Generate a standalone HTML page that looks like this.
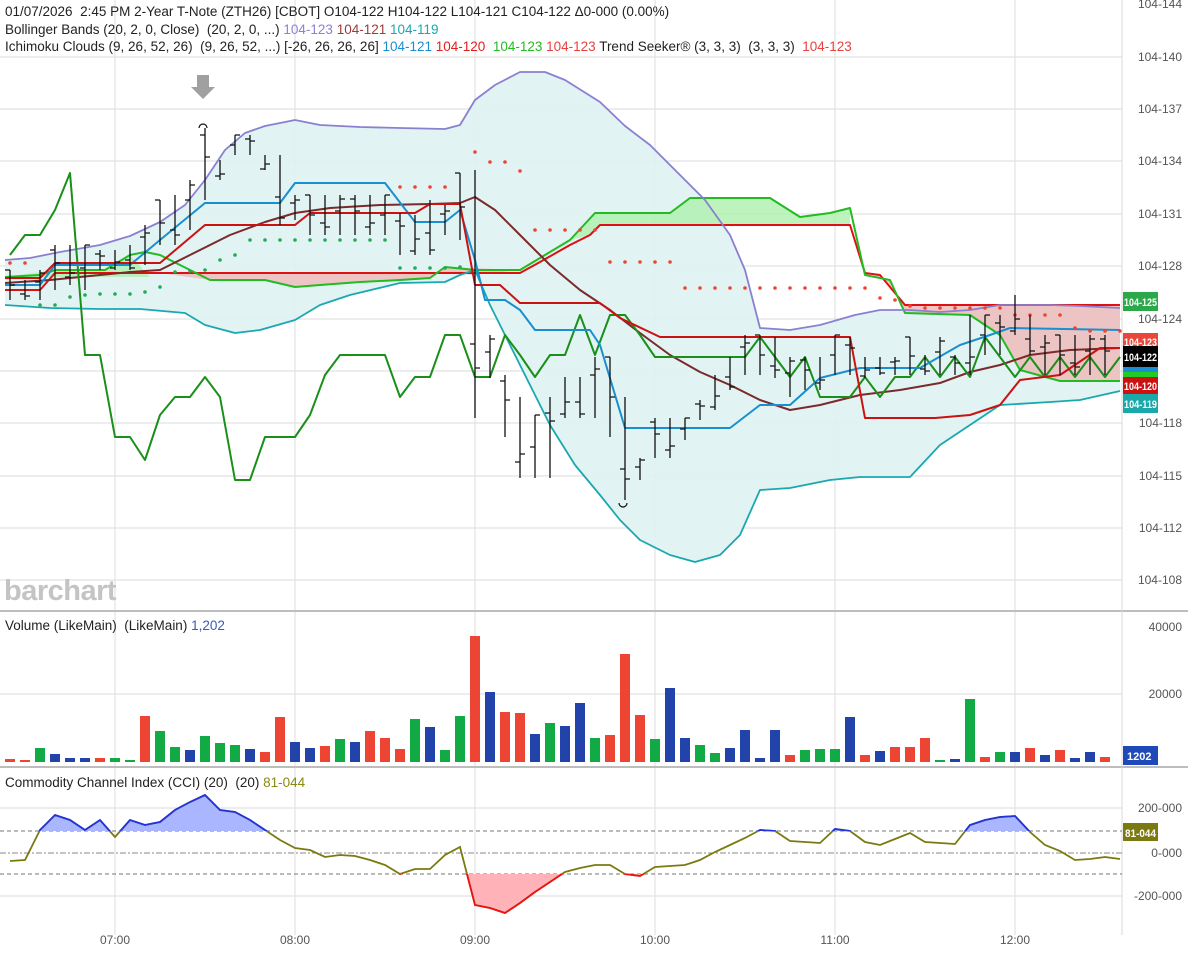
<!DOCTYPE html>
<html><head><meta charset="utf-8">
<style>
html,body{margin:0;padding:0;background:#fff;width:1188px;height:953px;overflow:hidden}
svg{display:block;font-family:"Liberation Sans","DejaVu Sans",sans-serif}
</style></head><body>
<svg id="s" width="1188" height="953" viewBox="0 0 1188 953" xmlns="http://www.w3.org/2000/svg">
<defs>
<clipPath id="above"><rect x="0" y="770" width="1122" height="61"/></clipPath>
<clipPath id="below"><rect x="0" y="874" width="1122" height="60"/></clipPath>
</defs>
<g id="grid" stroke="#e2e2e2" stroke-width="1.2"></g>
<polygon id="bbfill" fill="#dff2f3" opacity="0.9"/>
<polygon fill="#f2b8b8" opacity="0.8" points="160,273 445,273 475,275 520,270 520,270 445,267 430,278 400,280 360,282 320,285 295,287 265,280 210,280 160,273"/>
<polygon fill="#aef0ae" opacity="0.8" points="5,280 55,277 150,277 130,255 105,270 55,270 5,277"/>
<polygon fill="#aef0ae" opacity="0.8" points="570,240 595,213 670,213 690,198 770,198 800,217 830,213 850,208 850,225 600,225 590,235"/>
<polygon fill="#f0b8b8" opacity="0.8" points="865,273 880,275 905,305 1120,305 1120,381 1060,381 1020,370 1000,335 970,315 905,313 890,280"/>
<g id="lines" fill="none" stroke-width="2" stroke-linejoin="round"></g>
<g id="dots"></g>
<g id="bars" stroke="#111" stroke-width="1.3" fill="none"></g>
<polygon points="197,75 209,75 209,87 215,87 203,99 191,87 197,87" fill="#a0a0a0"/>
<path d="M199,128 a4,4 0 0 1 8,0" stroke="#111" fill="none" stroke-width="1.2"/>
<path d="M619,503 a4,4 0 0 0 8,0" stroke="#111" fill="none" stroke-width="1.2"/>
<text x="4" y="600" font-size="29" font-weight="bold" fill="#c4c4c4" letter-spacing="-0.5">barchart</text>
<line x1="0" y1="611" x2="1188" y2="611" stroke="#bdbdbd" stroke-width="2"/>
<line x1="0" y1="767" x2="1188" y2="767" stroke="#bdbdbd" stroke-width="2"/>
<line x1="1122" y1="0" x2="1122" y2="935" stroke="#d8d8d8" stroke-width="1"/>
<g id="vol"></g>
<line x1="0" y1="831" x2="1122" y2="831" stroke="#777" stroke-dasharray="4,3"/>
<line x1="0" y1="874" x2="1122" y2="874" stroke="#777" stroke-dasharray="4,3"/>
<line x1="0" y1="853" x2="1122" y2="853" stroke="#888" stroke-dasharray="6,2,2,2"/>
<g id="cci"></g>
<g font-size="13.5" fill="#222">
<text x="5" y="16">01/07/2026&#160; 2:45 PM 2-Year T-Note (ZTH26) [CBOT] O104-122 H104-122 L104-121 C104-122 Δ0-000 (0.00%)</text>
<text x="5" y="34">Bollinger Bands (20, 2, 0, Close)&#160; (20, 2, 0, ...) <tspan fill="#8a84d0">104-123</tspan> <tspan fill="#a03a3a">104-121</tspan> <tspan fill="#1aa8b0">104-119</tspan></text>
<text x="5" y="51">Ichimoku Clouds (9, 26, 52, 26)&#160; (9, 26, 52, ...) [-26, 26, 26, 26] <tspan fill="#1a8fd0">104-121</tspan> <tspan fill="#e02020">104-120</tspan>&#160; <tspan fill="#22bb22">104-123</tspan> <tspan fill="#e84040">104-123</tspan> Trend Seeker® (3, 3, 3)&#160; (3, 3, 3)&#160; <tspan fill="#e84040">104-123</tspan></text>
<text x="5" y="630">Volume (LikeMain)&#160; (LikeMain) <tspan fill="#3a5ab8">1,202</tspan></text>
<text x="5" y="787">Commodity Channel Index (CCI) (20)&#160; (20) <tspan fill="#8a8a10">81-044</tspan></text>
</g>
<g font-size="12" fill="#555" text-anchor="end">
<text x="1182" y="8">104-144</text>
<text x="1182" y="61">104-140</text>
<text x="1182" y="113">104-137</text>
<text x="1182" y="165">104-134</text>
<text x="1182" y="218">104-131</text>
<text x="1182" y="270">104-128</text>
<text x="1182" y="323">104-124</text>
<text x="1182" y="427">104-118</text>
<text x="1182" y="480">104-115</text>
<text x="1182" y="532">104-112</text>
<text x="1182" y="584">104-108</text>
<text x="1182" y="631">40000</text>
<text x="1182" y="698">20000</text>
<text x="1182" y="812">200-000</text>
<text x="1182" y="857">0-000</text>
<text x="1182" y="900">-200-000</text>
</g>
<g font-size="12" fill="#555" text-anchor="middle">
<text x="115" y="944">07:00</text><text x="295" y="944">08:00</text><text x="475" y="944">09:00</text>
<text x="655" y="944">10:00</text><text x="835" y="944">11:00</text><text x="1015" y="944">12:00</text>
</g>
<g font-size="11" font-weight="bold" fill="#fff">
<rect x="1123" y="292" width="35" height="19" fill="#2aa84a"/><text x="1124" y="306" textLength="33" lengthAdjust="spacingAndGlyphs">104-125</text>
<rect x="1123" y="333" width="35" height="16" fill="#e8483a"/><text x="1124" y="346" textLength="33" lengthAdjust="spacingAndGlyphs">104-123</text>
<rect x="1123" y="346" width="35" height="21" fill="#000"/><text x="1124" y="361" textLength="33" lengthAdjust="spacingAndGlyphs">104-122</text>
<rect x="1123" y="367" width="35" height="5" fill="#1a8fd0"/>
<rect x="1123" y="372" width="35" height="5" fill="#22cc22"/>
<rect x="1123" y="377" width="35" height="17" fill="#cc1111"/><text x="1124" y="390" textLength="33" lengthAdjust="spacingAndGlyphs">104-120</text>
<rect x="1123" y="394" width="35" height="19" fill="#1aa8a8"/><text x="1124" y="408" textLength="33" lengthAdjust="spacingAndGlyphs">104-119</text>
<rect x="1123" y="746" width="35" height="19" fill="#1f49b8"/><text x="1127" y="760">1202</text>
<rect x="1123" y="823" width="35" height="18" fill="#7a7a10"/><text x="1125" y="837" textLength="31" lengthAdjust="spacingAndGlyphs">81-044</text>
</g>
</svg>
<script>
var NS="http://www.w3.org/2000/svg";
function el(p,t,a){var e=document.createElementNS(NS,t);for(var k in a)e.setAttribute(k,a[k]);document.getElementById(p).appendChild(e);return e;}
[57,109,161,214,266,319,371,423,476,528,580,694,808,896].forEach(function(y){el("grid","line",{x1:0,y1:y,x2:1122,y2:y});});
[115,295,475,655,835,1015].forEach(function(x){el("grid","line",{x1:x,y1:0,x2:x,y2:935});});
var up="5,260 30,258 60,252 100,245 130,236 160,222 185,205 205,180 225,150 245,133 265,126 295,120 320,125 360,127 400,128 445,129 460,125 475,100 495,85 520,72 545,72 565,80 600,102 625,126 650,145 680,175 705,200 730,235 745,270 760,328 790,330 820,325 855,315 880,310 910,310 940,312 970,310 1000,305 1050,305 1080,306 1120,308";
var lo="5,305 50,308 100,309 140,309 185,313 205,325 235,333 260,330 295,320 320,305 350,295 400,283 445,282 460,275 475,270 490,305 510,345 530,385 550,425 575,465 600,495 620,520 640,540 670,555 695,562 720,555 740,535 760,490 790,488 830,480 860,477 910,477 940,445 970,425 1000,405 1050,402 1080,400 1120,391";
document.getElementById("bbfill").setAttribute("points",up+" "+lo.split(" ").reverse().join(" "));
function pl(pts,c,w){el("lines","polyline",{points:pts,stroke:c,"stroke-width":w||2});}
pl("5,290 40,290 55,273 520,273 540,262 570,245 590,235 600,225 850,225 865,273 880,275 905,305 1120,305","#dd1111");
pl("5,277 40,275 55,270 105,270 130,255 145,252 160,255 210,280 265,280 295,287 320,285 360,282 400,280 430,278 445,267 475,270 520,270 545,255 570,240 595,213 670,213 690,198 770,198 800,217 830,213 850,208 865,275 890,280 905,313 970,315 1000,335 1020,370 1060,381 1120,381","#22bb22");
pl(up,"#8a80d0",1.8);pl(lo,"#1aa8b0",1.8);
pl("5,283 50,280 100,275 130,272 160,270 190,255 230,235 265,222 295,213 330,208 380,205 430,204 460,203 475,197 495,210 520,235 550,265 580,290 610,310 640,333 670,355 700,372 730,385 760,400 790,410 820,405 860,395 900,390 940,383 970,372 1000,365 1030,355 1070,350 1120,348","#7a2a2a");
pl("10,255 25,235 40,235 55,210 70,173 85,355 100,355 115,437 130,437 145,460 160,415 175,397 190,397 205,377 220,397 235,480 250,480 265,437 295,437 310,415 325,375 340,355 385,355 400,397 415,377 430,377 445,335 460,335 475,377 490,377 505,335 520,355 535,377 550,355 565,355 580,315 595,355 610,315 625,315 640,335 655,357 745,357 760,337 775,357 790,377 805,357 820,397 850,397 865,377 880,397 895,377 910,377 925,357 940,377 955,357 970,377 985,337 1000,357 1015,377 1030,357 1045,377 1060,357 1075,377 1090,357 1105,377 1120,357","#1a8f1a");
pl("5,285 40,285 55,265 130,265 160,240 205,203 280,203 295,183 385,183 415,222 445,222 460,210 475,260 485,300 505,300 520,310 535,330 590,330 600,345 625,428 730,428 760,405 790,405 820,378 860,368 920,368 960,345 990,335 1010,328 1120,330","#1a8fd0");
pl("5,278 40,278 55,263 160,263 205,225 295,225 310,213 415,213 430,204 460,204 475,285 500,285 520,303 600,303 620,318 660,337 850,337 865,418 935,418 970,415 1000,405 1020,380 1060,375 1100,348 1120,348","#cc1111");
var d=[[10,263,"r"],[25,263,"r"],[40,305,"g"],[55,305,"g"],[70,297,"g"],[85,295,"g"],[100,294,"g"],[115,294,"g"],[130,294,"g"],[145,292,"g"],[160,287,"g"],[175,272,"g"],[190,271,"g"],[205,270,"g"],[220,260,"g"],[235,255,"g"],[250,240,"g"],[265,240,"g"],[280,240,"g"],[295,240,"g"],[310,240,"g"],[325,240,"g"],[340,240,"g"],[355,240,"g"],[370,240,"g"],[385,240,"g"],[400,268,"g"],[415,268,"g"],[430,268,"g"],[445,268,"g"],[460,267,"g"],[400,187,"r"],[415,187,"r"],[430,187,"r"],[445,187,"r"],[475,152,"r"],[490,162,"r"],[505,162,"r"],[520,171,"r"],[535,230,"r"],[550,230,"r"],[565,230,"r"],[580,230,"r"],[595,230,"r"],[610,262,"r"],[625,262,"r"],[640,262,"r"],[655,262,"r"],[670,262,"r"]];
for(var x=685;x<=865;x+=15)d.push([x,288,"r"]);
[[880,298],[895,300],[910,306],[925,308],[940,308],[955,308],[970,308],[985,308],[1000,308],[1015,315],[1030,315],[1045,315],[1060,315],[1075,328],[1090,331],[1105,331],[1120,331]].forEach(function(p){d.push([p[0],p[1],"r"]);});
d.forEach(function(p){el("dots","circle",{cx:p[0],cy:p[1],r:1.8,fill:p[2]=="r"?"#ee4433":"#22aa55"});});
var b=[[10,270,300],[25,280,300],[40,270,300],[55,245,290],[70,245,285],[85,245,290],[100,250,270],[115,250,270],[130,245,270],[145,225,265],[160,200,245],[175,195,245],[190,180,230],[205,128,200],[220,160,180],[235,135,155],[250,135,155],[265,155,170],[280,155,225],[295,195,220],[310,195,235],[325,195,235],[340,195,235],[355,195,235],[370,195,235],[385,195,235],[400,213,255],[415,215,255],[430,200,255],[445,205,235],[460,173,240],[475,170,418],[490,335,378],[505,375,437],[520,397,478],[535,415,478],[550,397,478],[565,377,418],[580,377,418],[595,357,418],[610,357,437],[625,397,500],[640,458,480],[655,418,458],[670,418,458],[685,418,440],[700,400,420],[715,375,410],[730,357,390],[745,335,375],[760,335,375],[775,337,378],[790,357,397],[805,357,390],[820,357,390],[835,335,375],[850,337,375],[865,357,378],[880,357,375],[895,357,375],[910,337,375],[925,355,375],[940,337,375],[955,355,375],[970,315,375],[985,315,355],[1000,315,355],[1015,295,335],[1030,315,355],[1045,335,375],[1060,335,375],[1075,335,375],[1090,335,375],[1105,335,375]];
b.forEach(function(q,i){var x=q[0],h=q[1],l=q[2],o=h+(l-h)*((i*7)%10)/10,c=h+(l-h)*((i*3+5)%10)/10;
el("bars","path",{d:"M"+x+","+h+"V"+l+"M"+(x-5)+","+o.toFixed(0)+"H"+x+"M"+x+","+c.toFixed(0)+"H"+(x+5)});});
var v="10r759 25r760 40g748 55b754 70b758 85b758 100r758 115g758 130g760 145r716 160g731 175g747 190b750 205g736 220g743 235g745 250b749 265r752 280r717 295b742 310b748 325r746 340g739 355b742 370r731 385r738 400r749 415g719 430b727 445g750 460g716 475r636 490b692 505r712 520r713 535b734 550g723 565b726 580b703 595g738 610r735 625r654 640r715 655g739 670b688 685b738 700g745 715g753 730b748 745b730 760b758 775b730 790r755 805g750 820g749 835g749 850b717 865r755 880b751 895r747 910r747 925r738 940g760 955b759 970g699 985r757 1000g752 1015b752 1030r748 1045b755 1060r750 1075b758 1090b752 1105r757".split(" ");
var col={r:"#ee4433",g:"#11aa44",b:"#2244aa"};
v.forEach(function(s){var m=s.match(/(\d+)([rgb])(\d+)/);var x=+m[1],y=+m[3];el("vol","rect",{x:x-5,y:y,width:10,height:Math.max(762-y,1.5),fill:col[m[2]]});});
var c="10,861 25,860 40,830 55,815 70,820 85,830 100,820 115,837 130,820 145,825 160,822 175,810 190,802 205,795 220,810 235,812 250,820 265,830 280,840 295,848 310,850 325,857 340,855 355,856 370,860 385,865 400,874 415,869 430,869 445,855 460,847 475,905 490,908 505,913 520,903 535,892 550,882 565,872 580,868 595,865 610,865 625,874 640,876 655,867 670,866 685,865 700,860 715,852 730,845 745,838 760,830 775,831 790,841 805,842 820,843 835,829 850,831 865,842 880,845 895,839 910,833 925,842 940,843 955,844 970,825 985,820 1000,817 1015,816 1030,832 1045,845 1060,851 1075,860 1090,859 1105,857 1120,859";
el("cci","polygon",{points:"10,831 "+c+" 1120,831",fill:"#aab6ff","clip-path":"url(#above)"});
el("cci","polygon",{points:"10,874 "+c+" 1120,874",fill:"#ffb3b8","clip-path":"url(#below)"});
el("cci","polyline",{points:c,fill:"none",stroke:"#7a7a10","stroke-width":1.8});
el("cci","polyline",{points:c,fill:"none",stroke:"#2233dd","stroke-width":1.8,"clip-path":"url(#above)"});
el("cci","polyline",{points:c,fill:"none",stroke:"#ee1111","stroke-width":1.8,"clip-path":"url(#below)"});
</script>
</body></html>
